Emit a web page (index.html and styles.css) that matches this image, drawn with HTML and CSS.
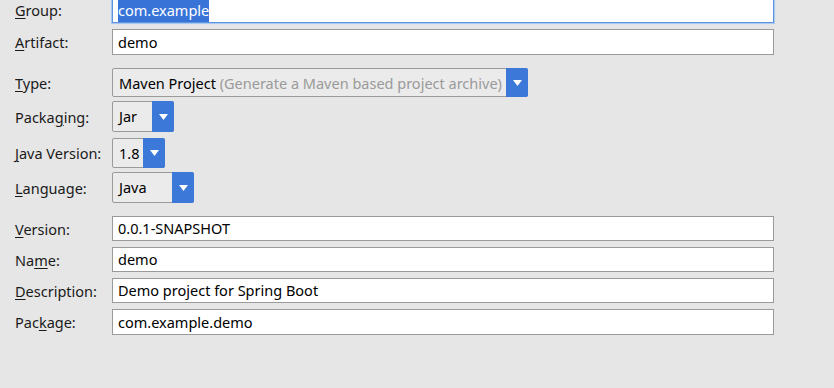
FILE: index.html
```html
<!DOCTYPE html>
<html>
<head>
<meta charset="utf-8">
<link rel="stylesheet" href="styles.css">
</head>
<body>
<div class="form">
  <div class="row r-group">
    <label class="lbl"><u>G</u>roup:</label>
    <div class="field focused"><span class="sel">com.example</span></div>
  </div>
  <div class="row r-artifact">
    <label class="lbl"><u>A</u>rtifact:</label>
    <div class="field">demo</div>
  </div>
  <div class="row r-type">
    <label class="lbl"><u>T</u>ype:</label>
    <div class="combo c-type"><span class="val">Maven Project <span class="hint">(Generate a Maven based project archive)</span></span><span class="btn"><svg width="9" height="6" viewBox="0 0 9 6"><path d="M0 0H9L4.5 6Z" fill="#fff"/></svg></span></div>
  </div>
  <div class="row r-pack">
    <label class="lbl">Packa<u>g</u>ing:</label>
    <div class="combo c-pack"><span class="val">Jar</span><span class="btn"><svg width="9" height="6" viewBox="0 0 9 6"><path d="M0 0H9L4.5 6Z" fill="#fff"/></svg></span></div>
  </div>
  <div class="row r-java">
    <label class="lbl"><u>J</u>ava Version:</label>
    <div class="combo c-java"><span class="val">1.8</span><span class="btn"><svg width="9" height="6" viewBox="0 0 9 6"><path d="M0 0H9L4.5 6Z" fill="#fff"/></svg></span></div>
  </div>
  <div class="row r-lang">
    <label class="lbl"><u>L</u>anguage:</label>
    <div class="combo c-lang"><span class="val">Java</span><span class="btn"><svg width="9" height="6" viewBox="0 0 9 6"><path d="M0 0H9L4.5 6Z" fill="#fff"/></svg></span></div>
  </div>
  <div class="row r-version">
    <label class="lbl"><u>V</u>ersion:</label>
    <div class="field">0.0.1-SNAPSHOT</div>
  </div>
  <div class="row r-name">
    <label class="lbl">Na<u>m</u>e:</label>
    <div class="field">demo</div>
  </div>
  <div class="row r-desc">
    <label class="lbl"><u>D</u>escription:</label>
    <div class="field">Demo project for Spring Boot</div>
  </div>
  <div class="row r-package">
    <label class="lbl">Pac<u>k</u>age:</label>
    <div class="field">com.example.demo</div>
  </div>
</div>
</body>
</html>
```
FILE: styles.css
```css
html, body {
  margin: 0;
  padding: 0;
  background: #e6e6e6;
  width: 834px;
  height: 388px;
  overflow: hidden;
}
body {
  font-family: "Noto Sans", "Open Sans", sans-serif;
  font-size: 14.5px;
  color: #000;
}
.form {
  display: flex;
  flex-direction: column;
  margin-top: -3px;
  padding-left: 15px;
}
.row {
  display: flex;
  align-items: center;
}
.lbl {
  width: 97px;
  flex: none;
  line-height: 20px;
  color: #1a1a1a;
}
.lbl u {
  text-decoration-thickness: 1px;
  text-underline-offset: 2px;
}
.field {
  box-sizing: border-box;
  width: 662px;
  height: 26px;
  background: #fff;
  border: 1px solid #9a9a9a;
  padding: 0 5px;
  line-height: 24px;
  white-space: nowrap;
}
.field.focused {
  border: 1px solid #5b93e0;
  box-shadow: 0 0 0 1px #a9c9f0, 0 0 3px #c4dcf6;
  padding: 0 5px;
  line-height: 24px;
}
.sel {
  background: #3874d8;
  color: #fff;
  padding: 2px 0;
}
.combo {
  box-sizing: border-box;
  display: flex;
  background: #ebebeb;
  border: 1px solid #9a9a9a;
  border-radius: 2px;
  height: 30px;
}
.combo .val {
  flex: 1;
  padding-left: 6px;
  line-height: 28px;
  white-space: nowrap;
}
.combo .hint {
  color: #9a9a9a;
}
.combo .btn {
  width: 22px;
  margin: -1px -1px -1px 0;
  background: #3c78d8;
  border-radius: 0 2px 2px 0;
  display: flex;
  align-items: center;
  justify-content: center;
}
.r-artifact { margin-top: 6px; }
.r-type { margin-top: 13px; }
.c-type { width: 416px; height: 29px; }
.r-pack { margin-top: 4px; }
.c-pack { width: 62px; height: 31px; }
.r-java { margin-top: 6px; }
.c-java { width: 53px; }
.r-lang { margin-top: 4px; }
.c-lang { width: 82px; height: 31px; }
.r-version { margin-top: 13px; }
.r-version .field { height: 25px; line-height: 23px; }
.r-name { margin-top: 6px; }
.r-name .field { height: 25px; line-height: 23px; }
.r-desc { margin-top: 6px; }
.r-desc .field { height: 25px; line-height: 23px; }
.r-package { margin-top: 6px; }
```
